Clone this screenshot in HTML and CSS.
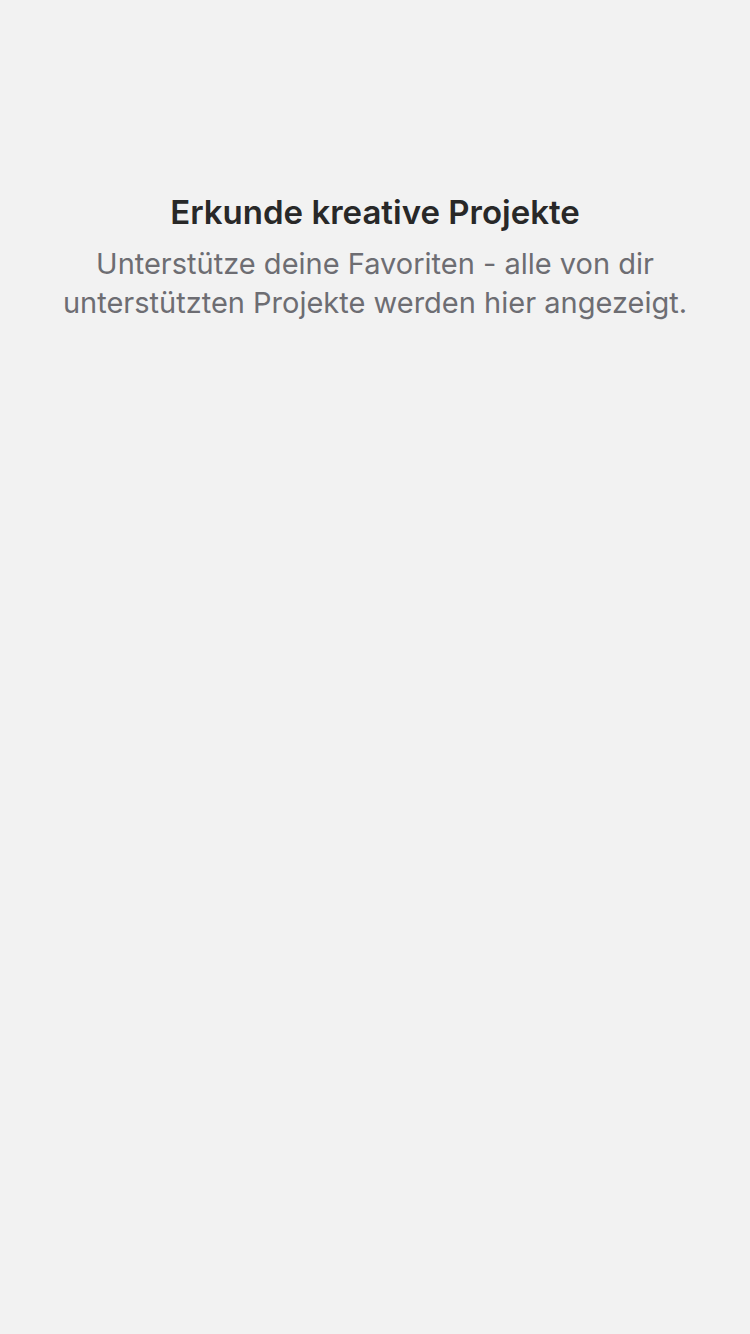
FILE: index.html
```html
<!DOCTYPE html>
<html lang="de">
<head>
<meta charset="utf-8">
<link rel="stylesheet" href="styles.css">
</head>
<body>
<main class="screen">
  <section class="empty">
    <h1 class="empty-title">Erkunde kreative Projekte</h1>
    <p class="empty-text">Unterstütze deine Favoriten - alle von dir unterstützten Projekte werden hier angezeigt.</p>
  </section>
</main>
</body>
</html>
```
FILE: styles.css
```css
html, body {
  margin: 0;
  padding: 0;
  background: #f2f2f2;
}
.screen {
  width: 750px;
  height: 1334px;
  box-sizing: border-box;
  padding-top: 190px;
  font-family: Inter, "Noto Sans", sans-serif;
}
.empty {
  display: flex;
  flex-direction: column;
  align-items: center;
  text-align: center;
  padding: 0 50px;
}
.empty-title {
  margin: 0;
  font-size: 33px;
  line-height: 44px;
  font-weight: 600;
  color: #282828;
}
.empty-text {
  margin: 10px 0 0;
  font-size: 29px;
  line-height: 39px;
  font-weight: 400;
  color: #6d6d72;
}
```
